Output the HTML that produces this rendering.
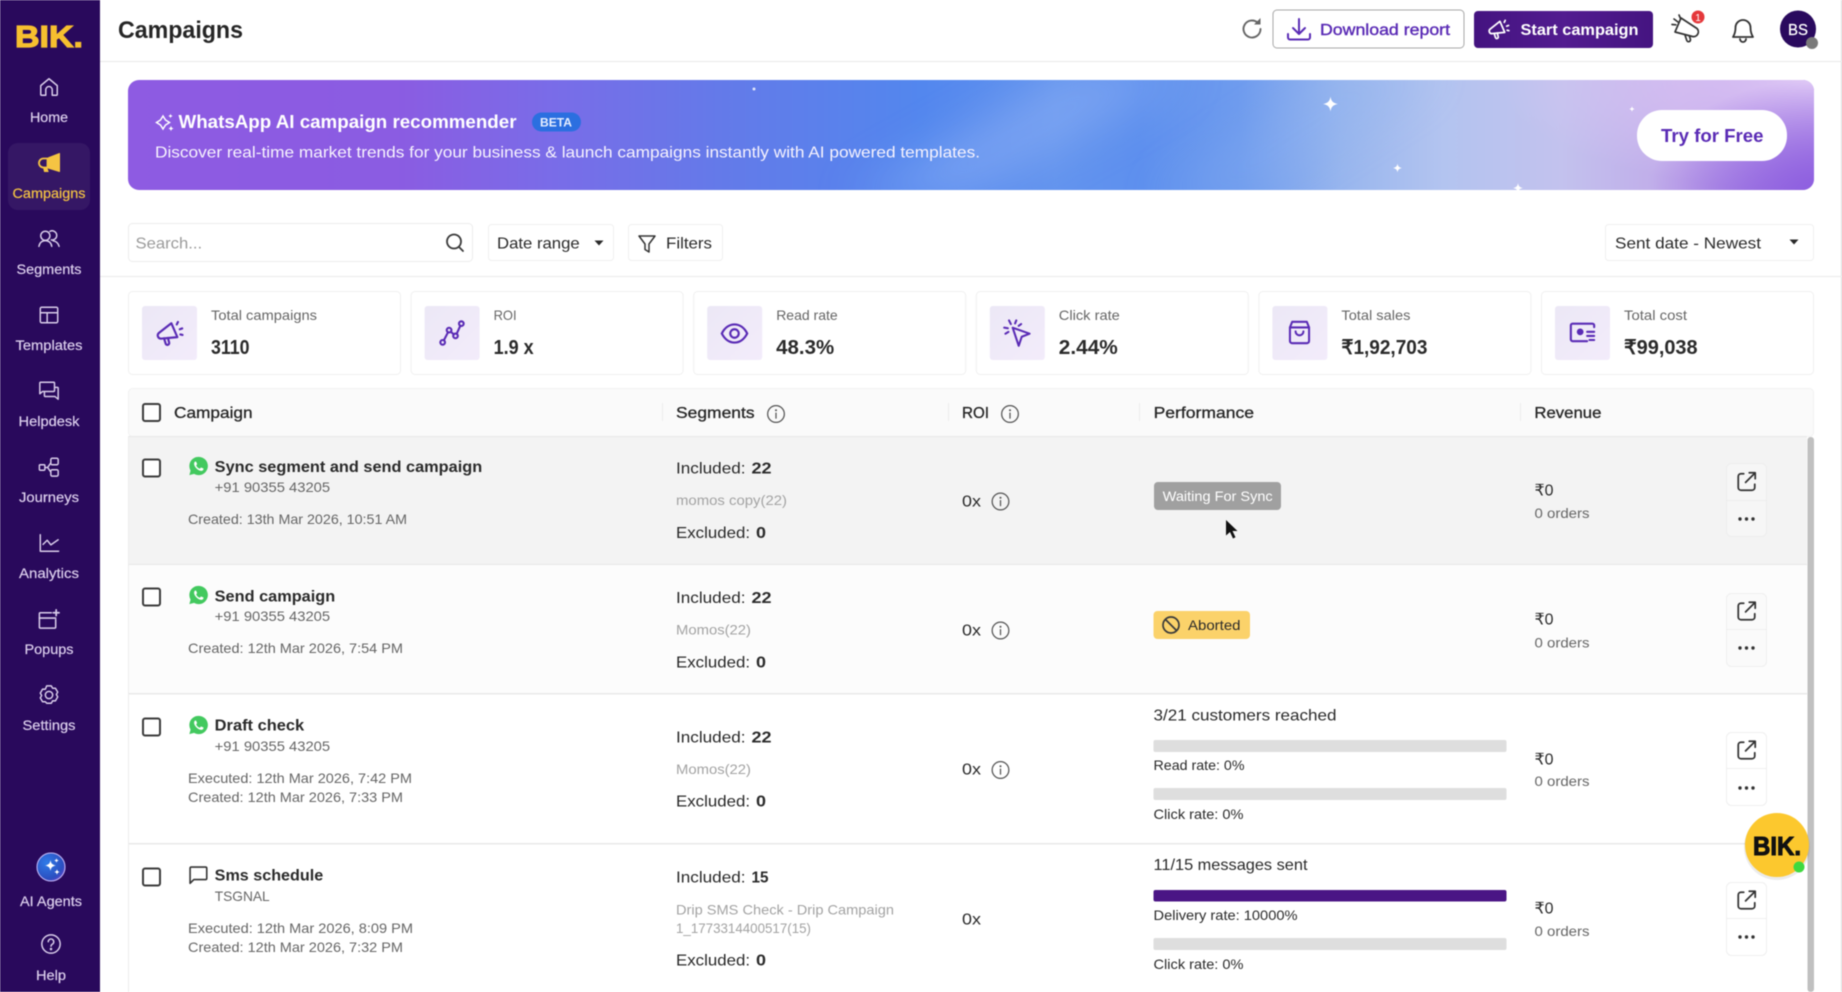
<!DOCTYPE html>
<html lang="en">
<head>
<meta charset="utf-8">
<title>Campaigns</title>
<style>
html,body{margin:0;padding:0;width:1842px;height:992px;overflow:hidden;background:#fff}
svg{display:block;filter:blur(.45px)}
text{font-family:"Liberation Sans",sans-serif;font-size:14px;fill:#666}
.s16{font-size:16px}.s18{font-size:18px}.s20{font-size:20px}.s24{font-size:24px}.s12{font-size:12px}.s15{font-size:15px}
.b{font-weight:700}
.d{fill:#2a2a2a}
.h{fill:#262626;stroke:#262626;stroke-width:.3}
.g{fill:#a3a3a3}
.w{fill:#fff}
.p{fill:#5a2bb5}
.nav{font-size:14px;fill:#ddd0ee;text-anchor:middle;stroke:#ddd0ee;stroke-width:.2}
.ni{color:#d9cdea}
.pi{color:#5a2bb5}
</style>
</head>
<body>
<svg width="1842" height="992" viewBox="0 0 1842 992" xmlns="http://www.w3.org/2000/svg">
<defs>
<linearGradient id="bn" x1="0" x2="1" y1="0" y2="0">
<stop offset="0" stop-color="#8e5be2"/><stop offset=".16" stop-color="#8b5ce2"/><stop offset=".25" stop-color="#7a6ce8"/><stop offset=".35" stop-color="#647ae9"/><stop offset=".47" stop-color="#5387ee"/><stop offset=".55" stop-color="#6394ee"/><stop offset=".6" stop-color="#5e90ee"/><stop offset=".66" stop-color="#6f9cee"/><stop offset=".72" stop-color="#98b6ee"/><stop offset=".78" stop-color="#b3c4f0"/><stop offset=".85" stop-color="#c3c2ee"/><stop offset=".92" stop-color="#c0a9e9"/><stop offset=".97" stop-color="#ab88e4"/><stop offset="1" stop-color="#a078e2"/>
</linearGradient>
<radialGradient id="tr" cx="1" cy="0" r="1"><stop offset="0" stop-color="#e0caf6"/><stop offset="1" stop-color="#e0caf6" stop-opacity="0"/></radialGradient>
<radialGradient id="br" cx="1" cy="1" r="1"><stop offset="0" stop-color="#8e5fe0"/><stop offset="1" stop-color="#8e5fe0" stop-opacity="0"/></radialGradient>
<linearGradient id="st" x1="0" x2="1"><stop offset="0" stop-color="#441380"/><stop offset=".5" stop-color="#521c90"/><stop offset="1" stop-color="#451481"/></linearGradient>
<linearGradient id="ib" x1="0" x2="1" y1="0" y2="1"><stop offset="0" stop-color="#ece8f6"/><stop offset="1" stop-color="#f3ecfb"/></linearGradient>
<radialGradient id="ai" cx=".35" cy=".35" r=".8"><stop offset="0" stop-color="#2f7be8"/><stop offset=".7" stop-color="#2b4fc0"/><stop offset="1" stop-color="#7a3fd0"/></radialGradient>
<clipPath id="bc"><rect x="128" y="80" width="1686" height="110" rx="11"/></clipPath>
<filter id="bl" x="-50%" y="-50%" width="200%" height="200%"><feGaussianBlur stdDeviation="24"/></filter>

<symbol id="mega" viewBox="0 0 24 24"><g fill="none" stroke="currentColor" stroke-width="1.800" stroke-linecap="round" stroke-linejoin="round"><path d="M13.500 3.500 18.500 15 4.800 16.300a2.700 2.700 0 0 1-1.500-4.800z"/><path d="M7.500 16l1.300 4.300a1.500 1.500 0 0 0 2.900-.8l-1-3.800"/><path d="M18 4.500 19 2.500M20.500 8.500l2-.7M21 12.800l1.800.4"/></g></symbol>
<symbol id="roi" viewBox="0 0 24 24"><g fill="none" stroke="currentColor" stroke-width="1.800" stroke-linecap="round"><circle cx="4" cy="20" r="2"/><circle cx="9.500" cy="9.500" r="2"/><circle cx="15" cy="14.500" r="2"/><circle cx="20" cy="4" r="2"/><path d="M5 18.300 8.600 11.300M11 11l2.600 2.200M16 12.700 19.100 5.800"/></g></symbol>
<symbol id="eye" viewBox="0 0 24 24"><g fill="none" stroke="currentColor" stroke-width="1.800"><path d="M1.500 12C4 7 8 4.500 12 4.500S20 7 22.500 12C20 17 16 19.500 12 19.500S4 17 1.500 12z"/><circle cx="12" cy="12" r="3.500"/></g></symbol>
<symbol id="click" viewBox="0 0 24 24"><g fill="none" stroke="currentColor" stroke-width="1.700" stroke-linecap="round" stroke-linejoin="round"><path d="M8 8 22 13 15.500 15.500 13 23z"/><path d="M5 2l1.500 3M11 2 10 4.500M1 8l3 .5M2 13l2.500-1.500M15 5l-2 1.500"/></g></symbol>
<symbol id="bag" viewBox="0 0 24 24"><g fill="none" stroke="currentColor" stroke-width="1.800" stroke-linejoin="round" stroke-linecap="round"><path d="M5.500 2.500h13l2 5v12a2 2 0 0 1-2 2h-13a2 2 0 0 1-2-2v-12z"/><path d="M3.500 7.500h17M8.500 11a3.500 3.500 0 0 0 7 0"/></g></symbol>
<symbol id="cost" viewBox="0 0 24 24"><g fill="none" stroke="currentColor" stroke-width="1.800" stroke-linecap="round"><path d="M22 7V5.500a1.500 1.500 0 0 0-1.500-1.500h-17A1.500 1.500 0 0 0 2 5.500v12A1.500 1.500 0 0 0 3.500 19H16"/><circle cx="10" cy="11" r="2" fill="currentColor"/><path d="M16 11h6M16 14.500h6M18 18h4"/></g></symbol>

<symbol id="home" viewBox="0 0 24 24"><g fill="none" stroke="currentColor" stroke-width="1.600" stroke-linejoin="round"><path d="M3 10.500 12 3l9 7.500V20a1 1 0 0 1-1 1h-4.500v-6a3.500 3.500 0 0 0-7 0v6H4a1 1 0 0 1-1-1z"/></g></symbol>
<symbol id="seg" viewBox="0 0 24 24"><g fill="none" stroke="currentColor" stroke-width="1.600" stroke-linecap="round"><circle cx="8" cy="8.500" r="5"/><path d="M13 3.700a5 5 0 1 1 1.500 9.300"/><path d="M1 20c.8-4 3.500-6.200 7-6.200s6.500 2.200 7 6.200"/><path d="M16.500 14c3 .4 5.500 2.500 6.500 6"/></g></symbol>
<symbol id="tpl" viewBox="0 0 24 24"><g fill="none" stroke="currentColor" stroke-width="1.600"><rect x="2.500" y="3.500" width="19" height="17" rx="1.500"/><path d="M2.500 9.500h19M10 9.500v11"/></g></symbol>
<symbol id="help" viewBox="0 0 24 24"><g fill="none" stroke="currentColor" stroke-width="1.600" stroke-linejoin="round"><path d="M17 2.500H3a1 1 0 0 0-1 1V15l3-2.500h12a1 1 0 0 0 1-1v-8a1 1 0 0 0-1-1z"/><path d="M18 8h3a1 1 0 0 1 1 1v12l-3.500-3H8a1 1 0 0 1-1-1v-4.500"/></g></symbol>
<symbol id="jour" viewBox="0 0 24 24"><g fill="none" stroke="currentColor" stroke-width="1.600"><rect x="1.500" y="9.500" width="6" height="6" rx="1"/><rect x="14" y="2.500" width="8" height="7" rx="1.500"/><rect x="14" y="15" width="8" height="7" rx="1.500"/><path d="M7.500 12.500h3l3.500-5M10.500 12.500l3.500 5"/></g></symbol>
<symbol id="ana" viewBox="0 0 24 24"><g fill="none" stroke="currentColor" stroke-width="1.600" stroke-linecap="round" stroke-linejoin="round"><path d="M2.500 3v18h20"/><path d="M5.500 13.500 10 9l4 5 8-5.500"/></g></symbol>
<symbol id="pop" viewBox="0 0 24 24"><g fill="none" stroke="currentColor" stroke-width="1.600" stroke-linecap="round"><path d="M15 5H3.500a1 1 0 0 0-1 1v14a1 1 0 0 0 1 1h15a1 1 0 0 0 1-1v-8"/><path d="M2.500 10.500h17"/><path d="M20 2v6M17 5h6" stroke-width="1.800"/></g></symbol>
<symbol id="gear" viewBox="0 0 24 24"><g fill="none" stroke="currentColor" stroke-width="1.600" stroke-linejoin="round"><path d="M9.500 2.500h5l1.500 2.700 3-.1 2.500 4.300-1.500 2.600 1.500 2.600-2.500 4.300-3-.1-1.500 2.700h-5L8 19.800l-3 .1-2.500-4.300L4 13 2.500 10.400 5 6.100l3 .1z" transform="translate(0 -.5)"/><circle cx="12" cy="12" r="4"/></g></symbol>
<symbol id="q" viewBox="0 0 24 24"><g fill="none" stroke="currentColor" stroke-width="1.600" stroke-linecap="round"><circle cx="12" cy="12" r="10"/><path d="M9 9.500a3 3 0 1 1 4.500 2.600c-1 .6-1.500 1.200-1.500 2.400"/><circle cx="12" cy="17.500" r=".6" fill="currentColor"/></g></symbol>

<symbol id="wa" viewBox="0 0 24 24"><path d="M12 1a11 11 0 0 0-9.500 16.500L1 23l5.700-1.500A11 11 0 1 0 12 1z" fill="#43c95f"/><path d="M8.500 6.500c-.6 0-1.800 1-1.800 2.800 0 3.600 4.800 8.500 8.500 8.500 1.800 0 2.800-1.300 2.800-2.100 0-.5-.1-.6-.4-.8l-2.200-1c-.4-.2-.6-.1-.8.200l-.8 1c-.2.200-.4.300-.7.100-1.700-.7-3-2-3.800-3.700-.1-.3 0-.5.200-.7l.6-.8c.2-.2.200-.4.100-.7l-.9-2.100c-.2-.4-.4-.5-.8-.5z" fill="#fff"/></symbol>
<symbol id="sms" viewBox="0 0 24 24"><path d="M4 2.500h17a1.500 1.500 0 0 1 1.500 1.500v12a1.500 1.500 0 0 1-1.500 1.500H7L2.500 22V4A1.500 1.500 0 0 1 4 2.500z" fill="none" stroke="#333" stroke-width="1.900" stroke-linejoin="round"/></symbol>
<symbol id="info" viewBox="0 0 24 24"><g fill="none" stroke="#555" stroke-width="1.500" stroke-linecap="round"><circle cx="12" cy="12" r="10"/><path d="M12 11v6"/><circle cx="12" cy="7.500" r=".5" fill="#555"/></g></symbol>
<symbol id="ext" viewBox="0 0 24 24"><g fill="none" stroke="#333" stroke-width="1.900" stroke-linecap="round" stroke-linejoin="round"><path d="M9 3.500H6A3 3 0 0 0 3 6.500v12a3 3 0 0 0 3 3h12a3 3 0 0 0 3-3V15"/><path d="M15 2.500h6.500V9M21 3 11 13"/></g></symbol>
<symbol id="spark" viewBox="0 0 24 24"><path d="M12 0c1 7 3.500 10.500 12 12-8.500 1.500-11 5-12 12-1-7-3.500-10.500-12-12 8.500-1.500 11-5 12-12z" fill="#fff"/></symbol>
<symbol id="cb" viewBox="0 0 19 19"><rect x="1" y="1" width="17" height="17" rx="2" fill="#fff" stroke="#3c3c3c" stroke-width="2"/></symbol>
</defs>

<!-- main background -->
<rect width="1842" height="992" fill="#fff"/>
<rect x="1841" width="1" height="992" fill="#d8d8d8"/>

<!-- sidebar -->
<rect width="100" height="992" fill="#29095c"/>
<text x="49" y="47" class="b" textLength="68" lengthAdjust="spacingAndGlyphs" text-anchor="middle" style="font-size:31px;fill:#f6bf2f;stroke:#f6bf2f;stroke-width:1.200">BIK.</text>
<rect x="8" y="143" width="82" height="67" rx="10" fill="#fff" fill-opacity=".06"/>

<g class="ni">
<use href="#home" x="38" y="76" width="22" height="22"/>
<path d="M59.500 153.500v18l-11-3.300v-10.500z" fill="#f5c443" stroke="#f5c443" stroke-width="1" stroke-linejoin="round"/>
<path d="M47.500 158.500H43.500a4.500 4.500 0 0 0 0 9h4z" fill="none" stroke="#f5c443" stroke-width="1.800"/>
<path d="M43.500 167.500l1 4h3.500l-1-3.500" fill="#f5c443" stroke="#f5c443" stroke-width="1"/>
<use href="#seg" x="38" y="228" width="22" height="22"/>
<use href="#tpl" x="38" y="304" width="22" height="22"/>
<use href="#help" x="38" y="380" width="22" height="22"/>
<use href="#jour" x="38" y="456" width="22" height="22"/>
<use href="#ana" x="38" y="532" width="22" height="22"/>
<use href="#pop" x="37" y="608" width="23" height="23"/>
<use href="#gear" x="38" y="684" width="22" height="22"/>
<use href="#q" x="40" y="933" width="22" height="22"/>
</g>
<circle cx="51" cy="867" r="14.500" fill="url(#ai)"/>
<circle cx="51" cy="867" r="14" fill="none" stroke="#c7b8f5" stroke-width="1"/>
<use href="#spark" x="45" y="860" width="11" height="11"/><use href="#spark" x="54" y="858" width="5" height="5"/><use href="#spark" x="54" y="869" width="6" height="6"/>

<text x="49" y="122" class="nav" textLength="38" lengthAdjust="spacingAndGlyphs">Home</text>
<text x="49" y="198" class="nav" textLength="73" lengthAdjust="spacingAndGlyphs" style="fill:#f5c443;stroke:#f5c443">Campaigns</text>
<text x="49" y="274" class="nav" textLength="65" lengthAdjust="spacingAndGlyphs">Segments</text>
<text x="49" y="350" class="nav" textLength="67" lengthAdjust="spacingAndGlyphs">Templates</text>
<text x="49" y="426" class="nav" textLength="61" lengthAdjust="spacingAndGlyphs">Helpdesk</text>
<text x="49" y="502" class="nav" textLength="60" lengthAdjust="spacingAndGlyphs">Journeys</text>
<text x="49" y="578" class="nav" textLength="60" lengthAdjust="spacingAndGlyphs">Analytics</text>
<text x="49" y="654" class="nav" textLength="49" lengthAdjust="spacingAndGlyphs">Popups</text>
<text x="49" y="730" class="nav" textLength="53" lengthAdjust="spacingAndGlyphs">Settings</text>
<text x="51" y="906" class="nav" textLength="62" lengthAdjust="spacingAndGlyphs">AI Agents</text>
<text x="51" y="980" class="nav" textLength="30" lengthAdjust="spacingAndGlyphs">Help</text>

<!-- top bar -->
<rect x="100" y="61" width="1742" height="1" fill="#e8e8e8"/>
<text x="118" y="38" class="s24 b" style="fill:#262626" textLength="125" lengthAdjust="spacingAndGlyphs">Campaigns</text>

<g fill="none" stroke="#666" stroke-width="1.900" stroke-linecap="round"><path d="M1258 23a8.500 8.500 0 1 0 2.500 6"/></g><path d="M1254 24.500h6.500V18z" fill="#666"/>

<rect x="1273" y="10" width="191" height="38" rx="4" fill="#fff" stroke="#a8a8a8" stroke-width="1"/>
<g fill="none" stroke="#5a2bb5" stroke-width="2" stroke-linecap="round" stroke-linejoin="round"><path d="M1299 19v15M1293 28l6 6 6-6M1288 34v3.500a2 2 0 0 0 2 2h18a2 2 0 0 0 2-2V34"/></g>
<text x="1320" y="35" class="s16 p" style="stroke:#5a2bb5;stroke-width:.4" textLength="130" lengthAdjust="spacingAndGlyphs">Download report</text>

<rect x="1474" y="11" width="179" height="37" rx="4" fill="url(#st)"/>
<use href="#mega" x="1487" y="18" width="23" height="23" style="color:#fff"/>
<text x="1520.500" y="35" class="s16 b w" textLength="118" lengthAdjust="spacingAndGlyphs">Start campaign</text>

<g fill="none" stroke="#333" stroke-width="1.700" stroke-linecap="round" stroke-linejoin="round">
<path d="M1681 18 1675 32 1692.500 36.500A4.800 4.800 0 0 0 1697 28.500Z"/>
<path d="M1685 35l1.800 5.500a1.900 1.900 0 0 0 3.600-1.200l-1-3.200"/>
<path d="M1674 19l4 3M1672 24.500l3.800.3M1679 15l1.300 3"/>
</g>
<circle cx="1698" cy="17" r="6.500" fill="#e5383b"/><text x="1698" y="21" text-anchor="middle" style="font-size:10px;fill:#fff">1</text>
<g fill="none" stroke="#333" stroke-width="1.800" stroke-linejoin="round" stroke-linecap="round"><path d="M1743 20a7.500 7.500 0 0 0-7.500 7.500c0 6-1.800 8-2.500 9.500h20c-.7-1.500-2.500-3.500-2.500-9.500A7.500 7.500 0 0 0 1743 20z"/><path d="M1740 39a3 3 0 0 0 6 0"/></g>
<ellipse cx="1798" cy="29" rx="18" ry="18.500" fill="#2a0a5e"/>
<text x="1798" y="35" text-anchor="middle" class="s16 w" style="stroke:#fff;stroke-width:.25" textLength="20" lengthAdjust="spacingAndGlyphs">BS</text>
<circle cx="1812" cy="43" r="6" fill="#7a7a7a"/>

<!-- banner -->
<rect x="128" y="80" width="1686" height="110" rx="11" fill="url(#bn)"/>
<g clip-path="url(#bc)">
<polygon points="850,200 960,200 1190,70 1080,70" fill="#92b2f5" opacity=".55" filter="url(#bl)"/>
<polygon points="1150,200 1240,200 1440,70 1350,70" fill="#8fb4f2" opacity=".25" filter="url(#bl)"/>
<rect x="1500" y="80" width="314" height="110" fill="url(#tr)"/>
<rect x="1650" y="80" width="164" height="110" fill="url(#br)"/>
<use href="#spark" x="1323" y="96" width="15" height="16"/>
<use href="#spark" x="1393" y="162" width="9" height="12"/>
<use href="#spark" x="1513" y="181" width="10" height="14"/>
<use href="#spark" x="1629" y="106" width="6" height="6"/>
<circle cx="754" cy="89" r="1.500" fill="#fff" opacity=".8"/>
</g>

<g fill="none" stroke="#fff" stroke-width="1.500"><path d="M163 116l2.500 4 4 2.500-4 2.500-2.500 4-2.500-4-4-2.500 4-2.500z"/></g>
<use href="#spark" x="168" y="113" width="5" height="6"/><use href="#spark" x="168" y="125" width="6" height="7"/>
<text x="178.500" y="128" class="s18 b w" textLength="338" lengthAdjust="spacingAndGlyphs">WhatsApp AI campaign recommender</text>
<rect x="532" y="112.500" width="49" height="19" rx="9.500" fill="#2b6fe0"/>
<text x="540" y="126.500" class="s12 b w" textLength="32" lengthAdjust="spacingAndGlyphs" style="fill:#e8efff">BETA</text>
<text x="155" y="157.500" class="s16 w" textLength="825" lengthAdjust="spacingAndGlyphs" style="fill:#f7f3fe">Discover real-time market trends for your business &amp; launch campaigns instantly with AI powered templates.</text>

<rect x="1637" y="110" width="150" height="51" rx="25" fill="#fff"/>
<text x="1661" y="142" class="s18 b p" textLength="102.500" lengthAdjust="spacingAndGlyphs">Try for Free</text>

<!-- filters -->
<rect x="128.500" y="223.500" width="344" height="38" rx="4" fill="#fff" stroke="#ececec"/>
<text x="135.500" y="248.500" class="s16" style="fill:#9a9a9a" textLength="66.600" lengthAdjust="spacingAndGlyphs">Search...</text>
<g fill="none" stroke="#3a3a3a" stroke-width="1.800" stroke-linecap="round"><circle cx="454" cy="241.500" r="7"/><path d="M459 247l4 4"/></g>
<rect x="488.500" y="224.500" width="125" height="36" rx="3" fill="#fff" stroke="#f0f0f0"/>
<text x="497" y="248.500" class="s16 d" textLength="82.700" lengthAdjust="spacingAndGlyphs">Date range</text>
<path d="M594.500 240.500h9l-4.500 5z" fill="#2a2a2a"/>
<rect x="628.500" y="224.500" width="94" height="36" rx="3" fill="#fff" stroke="#f0f0f0"/>
<path d="M639 236h16l-6 8v8l-4-2.500V244z" fill="none" stroke="#333" stroke-width="1.500" stroke-linejoin="round"/>
<text x="666" y="248.500" class="s16 d" textLength="46" lengthAdjust="spacingAndGlyphs">Filters</text>
<rect x="1605.500" y="224.500" width="208" height="36" rx="3" fill="#fff" stroke="#f0f0f0"/>
<text x="1615" y="248.500" class="s16 d" textLength="146" lengthAdjust="spacingAndGlyphs">Sent date - Newest</text>
<path d="M1789.500 239.500h9l-4.500 5z" fill="#2a2a2a"/>
<rect x="100" y="276" width="1742" height="1" fill="#ebebeb"/>

<!-- stats -->
<g fill="#fff" stroke="#f0f0f0">
<rect x="128.500" y="291.500" width="272" height="83" rx="4"/><rect x="411.100" y="291.500" width="272" height="83" rx="4"/><rect x="693.700" y="291.500" width="272" height="83" rx="4"/><rect x="976.300" y="291.500" width="272" height="83" rx="4"/><rect x="1258.900" y="291.500" width="272" height="83" rx="4"/><rect x="1541.500" y="291.500" width="272" height="83" rx="4"/>
</g>
<g fill="url(#ib)">
<rect x="142" y="306" width="55" height="54" rx="3"/><rect x="424.600" y="306" width="55" height="54" rx="3"/><rect x="707.200" y="306" width="55" height="54" rx="3"/><rect x="989.800" y="306" width="55" height="54" rx="3"/><rect x="1272.400" y="306" width="55" height="54" rx="3"/><rect x="1555" y="306" width="55" height="54" rx="3"/>
</g>
<g class="pi">
<use href="#mega" x="155" y="319" width="29" height="29"/>
<use href="#roi" x="438" y="319" width="28" height="28"/>
<use href="#eye" x="720" y="319" width="29" height="29"/>
<use href="#click" x="1003" y="318" width="29" height="29"/>
<use href="#bag" x="1286" y="319" width="27" height="27"/>
<use href="#cost" x="1568" y="319" width="29" height="28"/>
</g>
<text x="211" y="320" textLength="106" lengthAdjust="spacingAndGlyphs">Total campaigns</text>
<text x="493.600" y="320" textLength="23" lengthAdjust="spacingAndGlyphs">ROI</text>
<text x="776.200" y="320" textLength="61.500" lengthAdjust="spacingAndGlyphs">Read rate</text>
<text x="1058.800" y="320" textLength="61" lengthAdjust="spacingAndGlyphs">Click rate</text>
<text x="1341.400" y="320" textLength="69" lengthAdjust="spacingAndGlyphs">Total sales</text>
<text x="1624" y="320" textLength="63" lengthAdjust="spacingAndGlyphs">Total cost</text>
<text x="211" y="354" class="s20 b d" textLength="38.500" lengthAdjust="spacingAndGlyphs">3110</text>
<text x="493.600" y="354" class="s20 b d" textLength="40" lengthAdjust="spacingAndGlyphs">1.9 x</text>
<text x="776.200" y="354" class="s20 b d" textLength="58" lengthAdjust="spacingAndGlyphs">48.3%</text>
<text x="1058.800" y="354" class="s20 b d" textLength="59" lengthAdjust="spacingAndGlyphs">2.44%</text>
<text x="1341.400" y="354" class="s20 b d" textLength="86" lengthAdjust="spacingAndGlyphs">₹1,92,703</text>
<text x="1624" y="354" class="s20 b d" textLength="73.600" lengthAdjust="spacingAndGlyphs">₹99,038</text>

<!-- table -->
<rect x="128.500" y="388.500" width="1685" height="48" rx="4" fill="#fafafa" stroke="#f2f2f2"/>
<rect x="129" y="436" width="1678" height="129" fill="#f3f3f3"/>
<rect x="129" y="565" width="1678" height="128" fill="#fcfcfc"/>
<rect x="129" y="693" width="1678" height="299" fill="#fff"/>
<rect x="128" y="436" width="1" height="556" fill="#ececec"/>
<g fill="#e8e8e8"><rect x="129" y="436" width="1678" height="1"/><rect x="129" y="564" width="1678" height="1"/><rect x="129" y="693" width="1678" height="1.500"/><rect x="129" y="843" width="1678" height="1.500"/></g>
<rect x="1807.500" y="437" width="6.500" height="555" rx="3" fill="#c0c0c0"/>
<g fill="#ececec"><rect x="662" y="403" width="1" height="18"/><rect x="948" y="403" width="1" height="18"/><rect x="1139" y="403" width="1" height="18"/><rect x="1520" y="403" width="1" height="18"/></g>

<use href="#cb" x="142" y="403" width="19" height="19"/>
<text x="174" y="418" class="s16 h" textLength="78.600" lengthAdjust="spacingAndGlyphs">Campaign</text>
<text x="676" y="418" class="s16 h" textLength="78.600" lengthAdjust="spacingAndGlyphs">Segments</text>
<use href="#info" x="766" y="404" width="20" height="20"/>
<text x="962" y="418" class="s16 h" textLength="27" lengthAdjust="spacingAndGlyphs">ROI</text>
<use href="#info" x="1000" y="404" width="20" height="20"/>
<text x="1153.600" y="418" class="s16 h" textLength="100.400" lengthAdjust="spacingAndGlyphs">Performance</text>
<text x="1534.400" y="418" class="s16 h" textLength="67" lengthAdjust="spacingAndGlyphs">Revenue</text>

<!-- row 1 -->
<use href="#cb" x="142" y="458.500" width="19" height="19"/>
<use href="#wa" x="188.500" y="456" width="20" height="20"/>
<text x="214.700" y="472" class="s16 b d" textLength="267.500" lengthAdjust="spacingAndGlyphs">Sync segment and send campaign</text>
<text x="214.700" y="492" textLength="115.400" lengthAdjust="spacingAndGlyphs">+91 90355 43205</text>
<text x="188" y="524" textLength="219" lengthAdjust="spacingAndGlyphs">Created: 13th Mar 2026, 10:51 AM</text>
<text x="676" y="473.500" class="s16 d" textLength="69.500" lengthAdjust="spacingAndGlyphs">Included:</text>
<text x="751.500" y="473.500" class="s16 b d" textLength="20" lengthAdjust="spacingAndGlyphs">22</text>
<text x="676" y="505" class="g" textLength="111" lengthAdjust="spacingAndGlyphs">momos copy(22)</text>
<text x="676" y="538" class="s16 d" textLength="74" lengthAdjust="spacingAndGlyphs">Excluded:</text>
<text x="756" y="538" class="s16 b d" textLength="10" lengthAdjust="spacingAndGlyphs">0</text>
<text x="962" y="506.500" class="s16 d" textLength="19" lengthAdjust="spacingAndGlyphs">0x</text>
<use href="#info" x="990.500" y="491.500" width="20" height="20"/>
<rect x="1154" y="482" width="127" height="28" rx="4" fill="#a0a0a0"/>
<text x="1162.700" y="501" class="w" textLength="110" lengthAdjust="spacingAndGlyphs">Waiting For Sync</text>
<path d="M1226 520v15.500l4-3.500 3 6.500 2.500-1.200-3-6.300h5z" fill="#111"/>
<text x="1534.500" y="495.500" class="s16 d" textLength="19" lengthAdjust="spacingAndGlyphs">₹0</text>
<text x="1534.500" y="518" textLength="55" lengthAdjust="spacingAndGlyphs">0 orders</text>
<rect x="1726.500" y="463.500" width="40" height="73" rx="5" fill="#f6f6f6" stroke="#ededed"/><rect x="1727" y="500" width="39" height="1" fill="#ededed"/>
<use href="#ext" x="1735.500" y="470.500" width="22" height="22"/>
<g fill="#333"><circle cx="1740" cy="519" r="1.700"/><circle cx="1746.500" cy="519" r="1.700"/><circle cx="1753" cy="519" r="1.700"/></g>

<!-- row 2 -->
<use href="#cb" x="142" y="587.500" width="19" height="19"/>
<use href="#wa" x="188.500" y="585" width="20" height="20"/>
<text x="214.700" y="601.500" class="s16 b d" textLength="120.500" lengthAdjust="spacingAndGlyphs">Send campaign</text>
<text x="214.700" y="621" textLength="115.400" lengthAdjust="spacingAndGlyphs">+91 90355 43205</text>
<text x="188" y="653" textLength="215" lengthAdjust="spacingAndGlyphs">Created: 12th Mar 2026, 7:54 PM</text>
<text x="676" y="603" class="s16 d" textLength="69.500" lengthAdjust="spacingAndGlyphs">Included:</text>
<text x="751.500" y="603" class="s16 b d" textLength="20" lengthAdjust="spacingAndGlyphs">22</text>
<text x="676" y="634.500" class="g" textLength="75" lengthAdjust="spacingAndGlyphs">Momos(22)</text>
<text x="676" y="667.500" class="s16 d" textLength="74" lengthAdjust="spacingAndGlyphs">Excluded:</text>
<text x="756" y="667.500" class="s16 b d" textLength="10" lengthAdjust="spacingAndGlyphs">0</text>
<text x="962" y="635.500" class="s16 d" textLength="19" lengthAdjust="spacingAndGlyphs">0x</text>
<use href="#info" x="990.500" y="620.500" width="20" height="20"/>
<rect x="1153.500" y="611" width="96.500" height="28" rx="4" fill="#fbd26a"/>
<g fill="none" stroke="#3a3a3a" stroke-width="1.700"><circle cx="1171" cy="625" r="8"/><path d="M1165.500 619.500l11 11"/></g>
<text x="1188" y="630" class="d" textLength="52.500" lengthAdjust="spacingAndGlyphs">Aborted</text>
<text x="1534.500" y="624.500" class="s16 d" textLength="19" lengthAdjust="spacingAndGlyphs">₹0</text>
<text x="1534.500" y="647.500" textLength="55" lengthAdjust="spacingAndGlyphs">0 orders</text>
<rect x="1726.500" y="593.500" width="40" height="73" rx="5" fill="#fafafa" stroke="#efefef"/><rect x="1727" y="629" width="39" height="1" fill="#efefef"/>
<use href="#ext" x="1735.500" y="600" width="22" height="22"/>
<g fill="#333"><circle cx="1740" cy="648" r="1.700"/><circle cx="1746.500" cy="648" r="1.700"/><circle cx="1753" cy="648" r="1.700"/></g>

<!-- row 3 -->
<use href="#cb" x="142" y="717.500" width="19" height="19"/>
<use href="#wa" x="188.500" y="715" width="20" height="20"/>
<text x="214.700" y="730.500" class="s16 b d" textLength="89.500" lengthAdjust="spacingAndGlyphs">Draft check</text>
<text x="214.700" y="751" textLength="115.400" lengthAdjust="spacingAndGlyphs">+91 90355 43205</text>
<text x="188" y="783" textLength="224" lengthAdjust="spacingAndGlyphs">Executed: 12th Mar 2026, 7:42 PM</text>
<text x="188" y="802" textLength="215" lengthAdjust="spacingAndGlyphs">Created: 12th Mar 2026, 7:33 PM</text>
<text x="676" y="742.500" class="s16 d" textLength="69.500" lengthAdjust="spacingAndGlyphs">Included:</text>
<text x="751.500" y="742.500" class="s16 b d" textLength="20" lengthAdjust="spacingAndGlyphs">22</text>
<text x="676" y="774" class="g" textLength="75" lengthAdjust="spacingAndGlyphs">Momos(22)</text>
<text x="676" y="806.500" class="s16 d" textLength="74" lengthAdjust="spacingAndGlyphs">Excluded:</text>
<text x="756" y="806.500" class="s16 b d" textLength="10" lengthAdjust="spacingAndGlyphs">0</text>
<text x="962" y="774.500" class="s16 d" textLength="19" lengthAdjust="spacingAndGlyphs">0x</text>
<use href="#info" x="990.500" y="760" width="20" height="20"/>
<text x="1153.500" y="720.500" class="s16 d" textLength="183" lengthAdjust="spacingAndGlyphs">3/21 customers reached</text>
<rect x="1153.500" y="740" width="353" height="12" rx="2" fill="#dedede"/>
<text x="1153.500" y="770" class="d" textLength="91" lengthAdjust="spacingAndGlyphs">Read rate: 0%</text>
<rect x="1153.500" y="788" width="353" height="12" rx="2" fill="#dedede"/>
<text x="1153.500" y="819" class="d" textLength="90" lengthAdjust="spacingAndGlyphs">Click rate: 0%</text>
<text x="1534.500" y="764.500" class="s16 d" textLength="19" lengthAdjust="spacingAndGlyphs">₹0</text>
<text x="1534.500" y="786" textLength="55" lengthAdjust="spacingAndGlyphs">0 orders</text>
<rect x="1726.500" y="732.500" width="40" height="73" rx="5" fill="#fff" stroke="#efefef"/><rect x="1727" y="768" width="39" height="1" fill="#efefef"/>
<use href="#ext" x="1735.500" y="739" width="22" height="22"/>
<g fill="#333"><circle cx="1740" cy="788" r="1.700"/><circle cx="1746.500" cy="788" r="1.700"/><circle cx="1753" cy="788" r="1.700"/></g>

<!-- row 4 -->
<use href="#cb" x="142" y="867.500" width="19" height="19"/>
<use href="#sms" x="188" y="865" width="20" height="20"/>
<text x="214.700" y="880.500" class="s16 b d" textLength="108.500" lengthAdjust="spacingAndGlyphs">Sms schedule</text>
<text x="214.700" y="901" textLength="55" lengthAdjust="spacingAndGlyphs">TSGNAL</text>
<text x="188" y="933" textLength="225" lengthAdjust="spacingAndGlyphs">Executed: 12th Mar 2026, 8:09 PM</text>
<text x="188" y="952" textLength="215" lengthAdjust="spacingAndGlyphs">Created: 12th Mar 2026, 7:32 PM</text>
<text x="676" y="882.500" class="s16 d" textLength="69.500" lengthAdjust="spacingAndGlyphs">Included:</text>
<text x="751.500" y="882.500" class="s16 b d" textLength="17" lengthAdjust="spacingAndGlyphs">15</text>
<text x="676" y="914.500" class="g" textLength="218" lengthAdjust="spacingAndGlyphs">Drip SMS Check - Drip Campaign</text>
<text x="676" y="933" class="g" textLength="135" lengthAdjust="spacingAndGlyphs">1_1773314400517(15)</text>
<text x="676" y="965.500" class="s16 d" textLength="74" lengthAdjust="spacingAndGlyphs">Excluded:</text>
<text x="756" y="965.500" class="s16 b d" textLength="10" lengthAdjust="spacingAndGlyphs">0</text>
<text x="962" y="924.500" class="s16 d" textLength="19" lengthAdjust="spacingAndGlyphs">0x</text>
<text x="1153.500" y="870" class="s16 d" textLength="154" lengthAdjust="spacingAndGlyphs">11/15 messages sent</text>
<rect x="1153.500" y="890" width="353" height="11.500" rx="2" fill="#4a1585"/>
<text x="1153.500" y="920" class="d" textLength="144" lengthAdjust="spacingAndGlyphs">Delivery rate: 10000%</text>
<rect x="1153.500" y="938" width="353" height="12" rx="2" fill="#dedede"/>
<text x="1153.500" y="969" class="d" textLength="90" lengthAdjust="spacingAndGlyphs">Click rate: 0%</text>
<text x="1534.500" y="913.500" class="s16 d" textLength="19" lengthAdjust="spacingAndGlyphs">₹0</text>
<text x="1534.500" y="936" textLength="55" lengthAdjust="spacingAndGlyphs">0 orders</text>
<rect x="1726.500" y="882.500" width="40" height="73" rx="5" fill="#fff" stroke="#efefef"/><rect x="1727" y="918" width="39" height="1" fill="#efefef"/>
<use href="#ext" x="1735.500" y="889" width="22" height="22"/>
<g fill="#333"><circle cx="1740" cy="937" r="1.700"/><circle cx="1746.500" cy="937" r="1.700"/><circle cx="1753" cy="937" r="1.700"/></g>

<!-- BIK bubble -->
<ellipse cx="1777" cy="847" rx="33" ry="33" fill="#000" opacity=".08"/>
<ellipse cx="1777" cy="845" rx="32" ry="32" fill="#fcc82e"/>
<text x="1753" y="855" class="b" textLength="48" lengthAdjust="spacingAndGlyphs" style="font-size:26px;fill:#111;stroke:#111;stroke-width:1">BIK.</text>
<circle cx="1799" cy="867" r="5.500" fill="#3fd93f"/>
</svg>
</body>
</html>
